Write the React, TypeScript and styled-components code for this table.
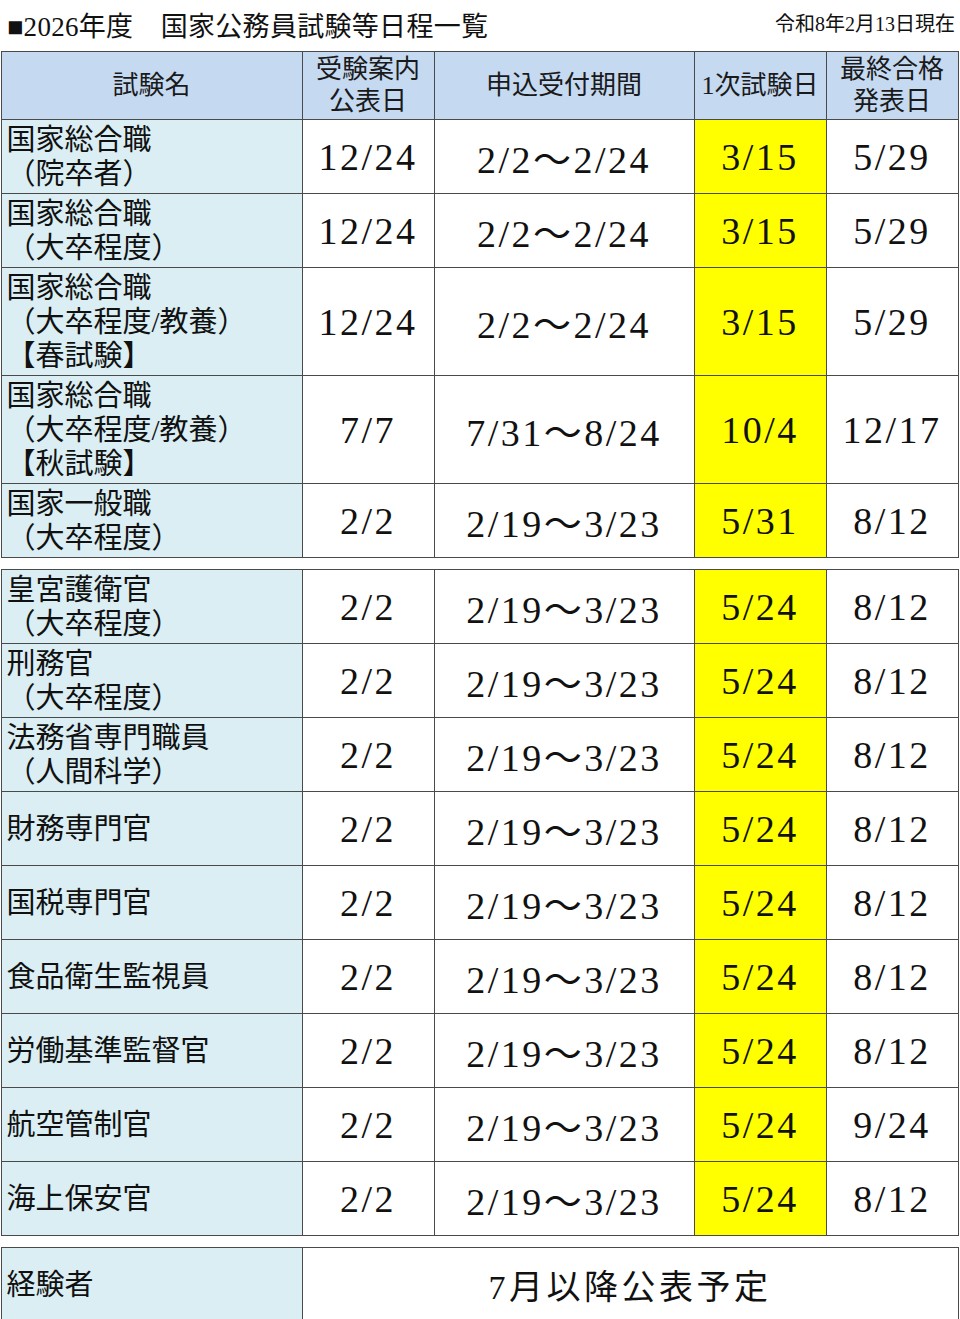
import React from 'react';
import styled, {createGlobalStyle} from 'styled-components';

const SERIF = `"Liberation Serif", "Noto Sans CJK JP", serif`

const GlobalStyle = createGlobalStyle`
  html, body {
    margin: 0;
    padding: 0;
    background: #ffffff;
  }
  body {
    font-family: ${SERIF};
    color: #111111;
  }
`

interface Row {
  name: string[],
  notice: string,
  apply: string,
  first: string,
  result: string,
  tall?: boolean
}

const mainRows: Row[] = [
  {name: ['国家総合職', '（院卒者）'], notice: '12/24', apply: '2/2～2/24', first: '3/15', result: '5/29'},
  {name: ['国家総合職', '（大卒程度）'], notice: '12/24', apply: '2/2～2/24', first: '3/15', result: '5/29'},
  {name: ['国家総合職', '（大卒程度/教養）', '【春試験】'], notice: '12/24', apply: '2/2～2/24', first: '3/15', result: '5/29', tall: true},
  {name: ['国家総合職', '（大卒程度/教養）', '【秋試験】'], notice: '7/7', apply: '7/31～8/24', first: '10/4', result: '12/17', tall: true},
  {name: ['国家一般職', '（大卒程度）'], notice: '2/2', apply: '2/19～3/23', first: '5/31', result: '8/12'},
]

const specialRows: Row[] = [
  {name: ['皇宮護衛官', '（大卒程度）'], notice: '2/2', apply: '2/19～3/23', first: '5/24', result: '8/12'},
  {name: ['刑務官', '（大卒程度）'], notice: '2/2', apply: '2/19～3/23', first: '5/24', result: '8/12'},
  {name: ['法務省専門職員', '（人間科学）'], notice: '2/2', apply: '2/19～3/23', first: '5/24', result: '8/12'},
  {name: ['財務専門官'], notice: '2/2', apply: '2/19～3/23', first: '5/24', result: '8/12'},
  {name: ['国税専門官'], notice: '2/2', apply: '2/19～3/23', first: '5/24', result: '8/12'},
  {name: ['食品衛生監視員'], notice: '2/2', apply: '2/19～3/23', first: '5/24', result: '8/12'},
  {name: ['労働基準監督官'], notice: '2/2', apply: '2/19～3/23', first: '5/24', result: '8/12'},
  {name: ['航空管制官'], notice: '2/2', apply: '2/19～3/23', first: '5/24', result: '9/24'},
  {name: ['海上保安官'], notice: '2/2', apply: '2/19～3/23', first: '5/24', result: '8/12'},
]

const Columns = () => (
  <colgroup>
    <col style={{width: 301}}/>
    <col style={{width: 132}}/>
    <col style={{width: 260}}/>
    <col style={{width: 132}}/>
    <col style={{width: 132}}/>
  </colgroup>
)

const ScheduleRows = ({rows}: {rows: Row[]}) => (
  <>
    {rows.map((r, i) => (
      <BodyRow key={i} $tall={r.tall}>
        <NameCell>
          {r.name.map((line, j) => <NameLine key={j}>{line}</NameLine>)}
        </NameCell>
        <DateCell>{r.notice}</DateCell>
        <DateCell>{r.apply}</DateCell>
        <DateCell $highlight>{r.first}</DateCell>
        <DateCell>{r.result}</DateCell>
      </BodyRow>
    ))}
  </>
)

export default function App() {
  return (
    <Page>
      <GlobalStyle/>
      <TitleBar>
        <Title>■2026年度　国家公務員試験等日程一覧</Title>
        <AsOf>令和8年2月13日現在</AsOf>
      </TitleBar>

      <Table>
        <Columns/>
        <thead>
          <HeadRow>
            <HeadCell>試験名</HeadCell>
            <HeadCell>受験案内<br/>公表日</HeadCell>
            <HeadCell>申込受付期間</HeadCell>
            <HeadCell>1次試験日</HeadCell>
            <HeadCell>最終合格<br/>発表日</HeadCell>
          </HeadRow>
        </thead>
        <tbody>
          <ScheduleRows rows={mainRows}/>
        </tbody>
      </Table>

      <Table>
        <Columns/>
        <tbody>
          <ScheduleRows rows={specialRows}/>
        </tbody>
      </Table>

      <Table>
        <Columns/>
        <tbody>
          <BodyRow>
            <NameCell>
              <NameLine>経験者</NameLine>
            </NameCell>
            <NoticeCell colSpan={4}>7月以降公表予定</NoticeCell>
          </BodyRow>
        </tbody>
      </Table>
    </Page>
  );
}

const Page = styled.div`
  width: 960px;
  display: flex;
  flex-direction: column;
  gap: 11px;
`

const TitleBar = styled.div`
  display: flex;
  justify-content: space-between;
  align-items: center;
  height: 40px;
  padding: 8px 5px 0 7px;
  box-sizing: border-box;
`

const Title = styled.div`
  font-family: ${SERIF};
  font-size: 27px;
  letter-spacing: 0.3px;
  color: #111;
`

const AsOf = styled.div`
  font-family: ${SERIF};
  font-size: 20px;
  margin-top: -4px;
  color: #111;
`

const Table = styled.table`
  width: 958px;
  border-collapse: collapse;
  table-layout: fixed;
  margin-left: 0.5px;

  td, th {
    border: 1.5px solid #4a4a4a;
    padding: 0;
  }
`

const HeadRow = styled.tr`
  height: 68px;
`

const HeadCell = styled.th`
  background: #c5d9f1;
  font-family: ${SERIF};
  font-weight: normal;
  font-size: 26px;
  line-height: 32px;
  text-align: center;
  vertical-align: middle;
  white-space: nowrap;
  color: #1a1a1a;
`

const BodyRow = styled.tr<{$tall?: boolean}>`
  height: ${({$tall}) => $tall ? '108px' : '74px'};
`

const NameCell = styled.td`
  background: #daeef3;
  padding-left: 5px !important;
  vertical-align: middle;
  text-align: left;
`

const NameLine = styled.div`
  font-family: ${SERIF};
  font-size: 29px;
  line-height: 34px;
  white-space: nowrap;
  color: #111;
`

const DateCell = styled.td<{$highlight?: boolean}>`
  background: ${({$highlight}) => $highlight ? '#ffff00' : '#ffffff'};
  font-family: ${SERIF};
  font-size: 38px;
  letter-spacing: 2.5px;
  text-align: center;
  vertical-align: middle;
  white-space: nowrap;
  color: #111;
`

const NoticeCell = styled.td`
  background: #ffffff;
  font-family: ${SERIF};
  font-size: 34px;
  letter-spacing: 3.5px;
  text-align: center;
  vertical-align: middle;
  color: #111;
`
